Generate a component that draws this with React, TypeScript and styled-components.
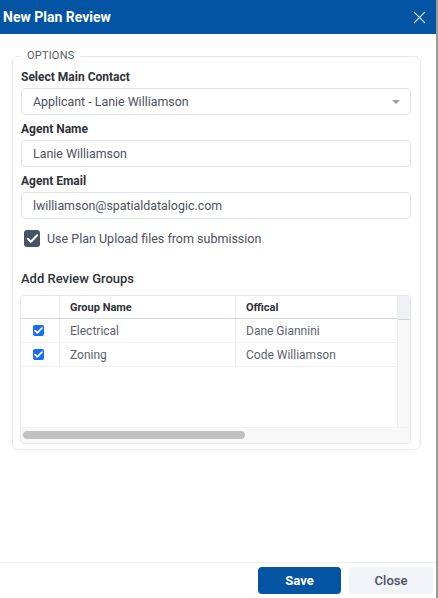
import styled, { createGlobalStyle } from 'styled-components';

const GlobalStyle = createGlobalStyle`
  html, body {
    margin: 0;
    padding: 0;
    background: #ffffff;
  }
  body {
    font-family: Roboto, "Noto Sans", "Liberation Sans", sans-serif;
  }
  * {
    box-sizing: border-box;
  }
`;

const Page = styled.div`
  display: flex;
  height: 598px;
  width: 438px;
  overflow: hidden;
`;

const Dialog = styled.div`
  width: 436px;
  height: 100%;
  display: flex;
  flex-direction: column;
  background: #fff;
`;

const Backdrop = styled.div`
  width: 2px;
  height: 100%;
  background: #9a9a9a;
`;

const Header = styled.header`
  height: 34px;
  flex: none;
  display: flex;
  align-items: center;
  justify-content: space-between;
  padding: 0 10px 0 3px;
  background: #0354a2;
  color: #fff;
`;

const Title = styled.h1`
  margin: 0;
  font-size: 14px;
  font-weight: 700;
`;

const CloseIcon = styled.button`
  border: none;
  background: none;
  padding: 0;
  width: 13px;
  height: 13px;
  display: flex;
  color: #d6e1ee;
  cursor: pointer;
`;

const Body = styled.div`
  flex: 1;
  padding: 15px 15px 0 12px;
`;

const Fieldset = styled.fieldset`
  margin: 0;
  border: 1px solid #e6e8eb;
  border-radius: 6px;
  padding: 0 9px 5px 8px;
`;

const Legend = styled.legend`
  padding: 0 6px;
  font-size: 11px;
  line-height: 14px;
  color: #555b63;
  letter-spacing: 0.2px;
`;

const Field = styled.div`
  display: flex;
  flex-direction: column;
  gap: 3px;
  margin-top: 6px;
`;

const Label = styled.label`
  font-size: 12px;
  line-height: 16px;
  font-weight: 700;
  color: #2f3237;
`;

const Input = styled.div`
  height: 27px;
  display: flex;
  align-items: center;
  justify-content: space-between;
  padding: 0 10px 0 11px;
  border: 1px solid #dfe4ea;
  border-radius: 4px;
  font-size: 12.4px;
  color: #4b5160;
`;

const Caret = styled.span`
  width: 0;
  height: 0;
  border-left: 4px solid transparent;
  border-right: 4px solid transparent;
  border-top: 4px solid #9aa0a8;
`;

const CheckRow = styled.div`
  display: flex;
  align-items: center;
  gap: 7px;
  margin: 11px 0 0 3px;
  font-size: 12.5px;
  color: #4b5160;
`;

const BigCheck = styled.span`
  width: 16px;
  height: 17px;
  border-radius: 3px;
  background: #465368;
  display: flex;
  align-items: center;
  justify-content: center;
`;

const SectionTitle = styled.h2`
  margin: 23px 0 7px;
  font-size: 13px;
  line-height: 18px;
  font-weight: 500;
  color: #2f3237;
`;

const Grid = styled.div`
  height: 149px;
  margin-left: -1px;
  border: 1px solid #e4e7eb;
  border-radius: 4px;
  display: grid;
  grid-template-columns: 1fr 12px;
  grid-template-rows: 1fr 16px;
  overflow: hidden;
`;

const Rows = styled.div`
  display: flex;
  flex-direction: column;
  border-right: 1px solid #eceef0;
`;

const Row = styled.div<{ $head?: boolean }>`
  display: grid;
  grid-template-columns: 39px 176px 1fr;
  height: ${p => (p.$head ? '23px' : '24px')};
  border-bottom: 1px solid ${p => (p.$head ? '#cfd6df' : '#eef0f2')};
  font-size: ${p => (p.$head ? '11px' : '12px')};
  font-weight: ${p => (p.$head ? 700 : 400)};
  color: ${p => (p.$head ? '#2f3237' : '#5b6270')};
`;

const Cell = styled.div<{ $center?: boolean }>`
  display: flex;
  align-items: center;
  padding-left: ${p => (p.$center ? '0' : '10px')};
  justify-content: ${p => (p.$center ? 'center' : 'flex-start')};
  border-right: 1px solid #eceef0;
  &:last-child {
    border-right: none;
  }
`;

const SmallCheck = styled.span`
  width: 11px;
  height: 11px;
  border-radius: 2px;
  background: #1570ef;
  display: flex;
  align-items: center;
  justify-content: center;
  margin-left: -4px;
`;

const VTrack = styled.div`
  display: flex;
  flex-direction: column;
  background: #f8f8f9;
  &::before {
    content: '';
    display: block;
    height: 23px;
    background: #eef0f3;
    border-bottom: 1px solid #cfd6df;
  }
`;

const HTrack = styled.div`
  grid-column: 1 / span 2;
  background: #f8f8f8;
  padding: 3px 2px;
  border-top: 1px solid #f0f0f0;
`;

const Thumb = styled.div`
  width: 222px;
  height: 8px;
  border-radius: 4px;
  background: #c1c1c1;
`;

const Footer = styled.footer`
  flex: none;
  display: flex;
  justify-content: flex-end;
  gap: 8px;
  padding: 4px 3px 4px;
  border-top: 1px solid #eceef1;
`;

const Button = styled.button<{ $primary?: boolean }>`
  width: ${p => (p.$primary ? '83px' : '84px')};
  height: 27px;
  border: none;
  border-radius: 4px;
  font-family: inherit;
  font-size: 13px;
  font-weight: ${p => (p.$primary ? 700 : 500)};
  background: ${p => (p.$primary ? '#0354a2' : '#f1f3f6')};
  color: ${p => (p.$primary ? '#fff' : '#4b5160')};
  cursor: pointer;
`;

const Tick = ({ size, width }: { size: number; width: number }) => (
  <svg width={size} height={size} viewBox="0 0 16 16" fill="none">
    <path d="M3 8.3l3.2 3.2L13 4.6" stroke="#fff" strokeWidth={width} strokeLinecap="round" strokeLinejoin="round" />
  </svg>
);

const groups = [
  { name: 'Electrical', official: 'Dane Giannini' },
  { name: 'Zoning', official: 'Code Williamson' },
];

export default function App() {
  return (
    <>
      <GlobalStyle />
      <Page>
        <Dialog>
          <Header>
            <Title>New Plan Review</Title>
            <CloseIcon aria-label="Close">
              <svg width="13" height="13" viewBox="0 0 14 14">
                <path d="M1.5 1.5l11 11M12.5 1.5l-11 11" stroke="currentColor" strokeWidth="1.4" strokeLinecap="round" />
              </svg>
            </CloseIcon>
          </Header>
          <Body>
            <Fieldset>
              <Legend>OPTIONS</Legend>
              <Field>
                <Label>Select Main Contact</Label>
                <Input>
                  Applicant - Lanie Williamson
                  <Caret />
                </Input>
              </Field>
              <Field>
                <Label>Agent Name</Label>
                <Input>Lanie Williamson</Input>
              </Field>
              <Field>
                <Label>Agent Email</Label>
                <Input>lwilliamson@spatialdatalogic.com</Input>
              </Field>
              <CheckRow>
                <BigCheck>
                  <Tick size={15} width={2.2} />
                </BigCheck>
                Use Plan Upload files from submission
              </CheckRow>
              <SectionTitle>Add Review Groups</SectionTitle>
              <Grid>
                <Rows>
                  <Row $head>
                    <Cell $center />
                    <Cell>Group Name</Cell>
                    <Cell>Offical</Cell>
                  </Row>
                  {groups.map(g => (
                    <Row key={g.name}>
                      <Cell $center>
                        <SmallCheck>
                          <Tick size={11} width={2.6} />
                        </SmallCheck>
                      </Cell>
                      <Cell>{g.name}</Cell>
                      <Cell>{g.official}</Cell>
                    </Row>
                  ))}
                </Rows>
                <VTrack />
                <HTrack>
                  <Thumb />
                </HTrack>
              </Grid>
            </Fieldset>
          </Body>
          <Footer>
            <Button $primary>Save</Button>
            <Button>Close</Button>
          </Footer>
        </Dialog>
        <Backdrop />
      </Page>
    </>
  );
}
